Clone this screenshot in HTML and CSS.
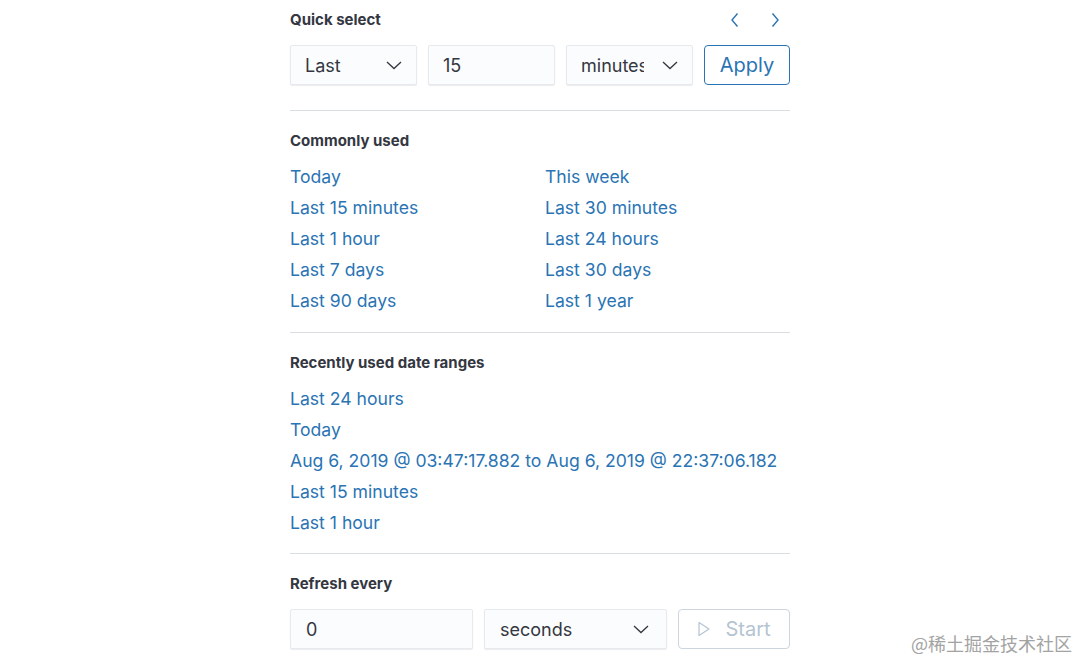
FILE: index.html
```html
<!DOCTYPE html>
<html>
<head>
<meta charset="utf-8">
<link rel="stylesheet" href="styles.css">
</head>
<body>
<div class="panel">
  <div class="header-row">
    <div class="title">Quick select</div>
    <div class="arrows">
      <svg class="arrow" width="12" height="16" viewBox="0 0 12 16"><path d="M8.5 1.5 L3 8 L8.5 14.5" fill="none" stroke="#2a74b4" stroke-width="1.4"/></svg>
      <svg class="arrow" width="12" height="16" viewBox="0 0 12 16"><path d="M3.5 1.5 L9 8 L3.5 14.5" fill="none" stroke="#2a74b4" stroke-width="1.4"/></svg>
    </div>
  </div>
  <div class="quick-row">
    <div class="field select"><span>Last</span><svg class="chev" width="16" height="9" viewBox="0 0 16 9"><path d="M1 1 L8 7.5 L15 1" fill="none" stroke="#343741" stroke-width="1.3"/></svg></div>
    <div class="field"><span>15</span></div>
    <div class="field select"><span class="clip">minutes</span><svg class="chev" width="16" height="9" viewBox="0 0 16 9"><path d="M1 1 L8 7.5 L15 1" fill="none" stroke="#343741" stroke-width="1.3"/></svg></div>
    <button class="btn apply">Apply</button>
  </div>
  <hr class="divider">
  <div class="title sec">Commonly used</div>
  <div class="common">
    <a>Today</a><a>This week</a>
    <a>Last 15 minutes</a><a>Last 30 minutes</a>
    <a>Last 1 hour</a><a>Last 24 hours</a>
    <a>Last 7 days</a><a>Last 30 days</a>
    <a>Last 90 days</a><a>Last 1 year</a>
  </div>
  <hr class="divider after-common">
  <div class="title sec">Recently used date ranges</div>
  <div class="recent">
    <a>Last 24 hours</a>
    <a>Today</a>
    <a>Aug 6, 2019 @ 03:47:17.882 to Aug 6, 2019 @ 22:37:06.182</a>
    <a>Last 15 minutes</a>
    <a>Last 1 hour</a>
  </div>
  <hr class="divider after-recent">
  <div class="title sec">Refresh every</div>
  <div class="refresh-row">
    <div class="field"><span>0</span></div>
    <div class="field select wide"><span>seconds</span><svg class="chev" width="16" height="9" viewBox="0 0 16 9"><path d="M1 1 L8 7.5 L15 1" fill="none" stroke="#343741" stroke-width="1.3"/></svg></div>
    <button class="btn start"><svg width="14" height="16" viewBox="0 0 14 16"><path d="M2 1.5 L12 8 L2 14.5 Z" fill="none" stroke="#b4c4d2" stroke-width="1.2" stroke-linejoin="round"/></svg><span>Start</span></button>
  </div>
</div>
<div class="watermark">@稀土掘金技术社区</div>
</body>
</html>
```

FILE: styles.css
```css
html, body {
  margin: 0;
  padding: 0;
  background: #ffffff;
}
body {
  font-family: Inter, "Noto Sans", sans-serif;
  color: #343741;
  width: 1079px;
  height: 662px;
  overflow: hidden;
  position: relative;
}
.panel {
  width: 500px;
  margin: 0 auto;
  padding-top: 8px;
  padding-left: 1px;
}
.header-row {
  display: flex;
  justify-content: space-between;
  align-items: center;
  height: 24px;
}
.title {
  font-size: 15px;
  font-weight: 700;
  line-height: 20px;
  color: #343741;
}
.arrows {
  display: flex;
  gap: 28px;
  padding-right: 9px;
}
.arrow { display: block; }
.quick-row {
  display: grid;
  grid-template-columns: 127px 127px 127px 86px;
  gap: 11px;
  margin-top: 13px;
  height: 40px;
}
.field {
  box-sizing: border-box;
  height: 40px;
  background: #fbfcfd;
  border: 1px solid #e6eaee;
  box-shadow: 0 1px 1px rgba(0,0,0,0.08);
  border-radius: 2px;
  display: flex;
  align-items: center;
  justify-content: space-between;
  padding: 0 14px 0 14px;
  font-size: 18px;
  color: #343741;
}
.field span { white-space: nowrap; }
.field .clip {
  width: 63px;
  overflow: hidden;
}
.field.wide { padding-right: 17px; }
.chev { display: block; flex: none; }
.btn {
  box-sizing: border-box;
  height: 40px;
  border-radius: 4px;
  background: #ffffff;
  font-family: Inter, "Noto Sans", sans-serif;
  font-size: 20px;
  display: flex;
  align-items: center;
  justify-content: center;
}
.apply {
  border: 1px solid #2a74b4;
  color: #2a74b4;
}
.divider {
  border: none;
  border-top: 1px solid #dadee2;
  margin: 25px 0 0;
  height: 0;
}
.divider.after-common { margin-top: 16px; }
.divider.after-recent { margin-top: 15px; }
.sec { margin-top: 20px; }
.common {
  display: grid;
  grid-template-columns: 255px 1fr;
  margin-top: 10px;
}
.common a, .recent a {
  color: #2a74b4;
  font-size: 17.6px;
  line-height: 31px;
  white-space: nowrap;
}
.recent {
  display: flex;
  flex-direction: column;
  margin-top: 10px;
}
.refresh-row {
  display: grid;
  grid-template-columns: 183px 183px 112px;
  gap: 11px;
  margin-top: 15px;
}
.refresh-row .field { padding-left: 15px; }
.start {
  border: 1px solid #cdd6df;
  color: #b4c4d2;
  gap: 14px;
}
.start svg { display: block; }
.watermark {
  position: absolute;
  right: 7px;
  bottom: 6px;
  font-family: "Noto Sans CJK SC", sans-serif;
  font-size: 18px;
  color: #a3a3a3;
}
```
